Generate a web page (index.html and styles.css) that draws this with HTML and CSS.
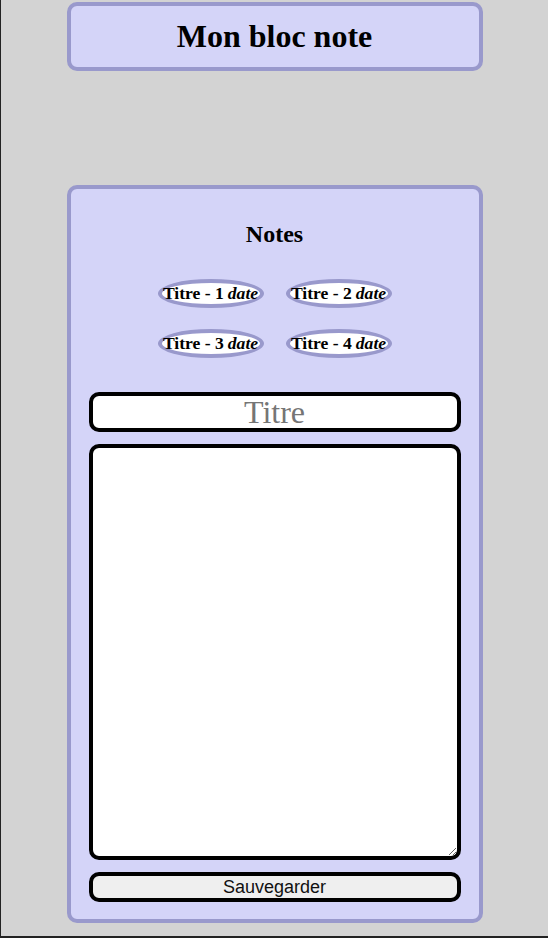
FILE: index.html
```html
<!DOCTYPE html>
<html lang="fr">
<head>
    <meta charset="UTF-8">
    <meta name="viewport" content="width=device-width, initial-scale=1.0">
    <title>Mon bloc note</title>
    <link rel="stylesheet" href="styles.css">
</head>
<body>
<header class="header">
    <h1>Mon bloc note</h1>
</header>

<main class="panel">
    <h2>Notes</h2>
    <div class="notes">
        <span class="note">Titre - 1 <i>date</i></span>
        <span class="note">Titre - 2 <i>date</i></span>
        <span class="note">Titre - 3 <i>date</i></span>
        <span class="note">Titre - 4 <i>date</i></span>
    </div>
    <form class="editor">
        <input type="text" id="title" placeholder="Titre">
        <textarea id="content"></textarea>
        <button type="button" id="saveButton">Sauvegarder</button>
    </form>
</main>
</body>
</html>
```

FILE: styles.css
```css
html {
    height: 100%;
}

body {
    margin: 0;
    min-height: 100%;
    box-sizing: border-box;
    background-color: lightgray;
    font-family: "Liberation Serif", "Times New Roman", serif;
    border-left: 1px solid #222;
    border-bottom: 2px solid #222;
    padding-top: 2px;
}

.header,
.panel {
    width: 416px;
    box-sizing: border-box;
    margin: 0 auto;
    background-color: #d4d4f8;
    border: 4px solid #9999cc;
    border-radius: 10px;
}

.header h1 {
    margin: 0;
    padding: 12px 0 12px;
    font-size: 32px;
    line-height: 37px;
    text-align: center;
}

.panel {
    margin-top: 114px;
    height: 738px;
    padding: 31px 18px 17px;
    display: flex;
    flex-direction: column;
}

.panel h2 {
    margin: 0;
    font-size: 24px;
    line-height: 28px;
    text-align: center;
}

.notes {
    margin: 31px auto 0;
    width: 240px;
    display: flex;
    flex-wrap: wrap;
    justify-content: center;
    column-gap: 22px;
    row-gap: 21px;
}

.note {
    width: 106px;
    box-sizing: border-box;
    height: 29px;
    line-height: 21px;
    background-color: white;
    border: 4px solid #9999cc;
    border-radius: 50%;
    font-weight: bold;
    font-size: 17.6px;
    text-align: center;
    white-space: nowrap;
    display: flex;
    justify-content: center;
}

.note i {
    margin-left: 4px;
}

.editor {
    margin-top: 34px;
    display: flex;
    flex-direction: column;
    gap: 12px;
    flex: 1;
}

#title,
#content,
#saveButton {
    box-sizing: border-box;
    width: 100%;
    border: 4px solid black;
    border-radius: 10px;
    margin: 0;
}

#title {
    height: 40px;
    font-family: "Liberation Serif", serif;
    font-size: 32px;
    text-align: center;
    padding: 0 8px;
}

#title::placeholder {
    color: #757575;
}

#content {
    height: 416px;
    padding: 6px;
    font-family: "Liberation Serif", serif;
    font-size: 16px;
}

#saveButton {
    height: 30px;
    background-color: #efefef;
    font-family: "Liberation Sans", Arial, sans-serif;
    font-size: 18px;
    color: #111;
    padding: 0;
}
```
